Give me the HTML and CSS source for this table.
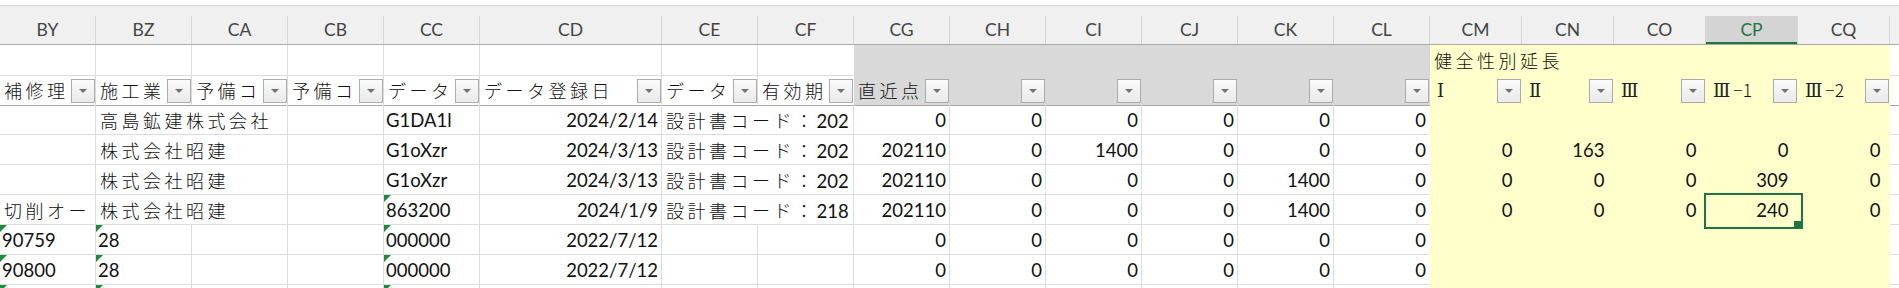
FILE: index.html
```html
<!DOCTYPE html>
<html lang="ja">
<head>
<meta charset="utf-8">
<title>Sheet</title>
<link rel="stylesheet" href="styles.css">
</head>
<body>
<div class="sheet">
  <div class="topgap"></div>
  <div class="colhead">
    <div class="hc">BY</div><div class="hc">BZ</div><div class="hc">CA</div><div class="hc">CB</div><div class="hc">CC</div><div class="hc">CD</div><div class="hc">CE</div><div class="hc">CF</div><div class="hc">CG</div><div class="hc">CH</div><div class="hc">CI</div><div class="hc">CJ</div><div class="hc">CK</div><div class="hc">CL</div><div class="hc">CM</div><div class="hc">CN</div><div class="hc">CO</div><div class="hc hsel">CP</div><div class="hc">CQ</div><div class="hc end"></div>
  </div>

  <div class="row">
    <div class="c"></div><div class="c"></div><div class="c"></div><div class="c"></div><div class="c"></div><div class="c"></div><div class="c"></div><div class="c nb"></div>
    <div class="c g s6"></div>
    <div class="c y s5"><span class="j">健全性別延長</span></div>
    <div class="c end"></div>
  </div>

  <div class="row r2">
    <div class="c"><span class="j">補修理</span><i class="fb"></i></div>
    <div class="c"><span class="j">施工業</span><i class="fb"></i></div>
    <div class="c"><span class="j">予備コ</span><i class="fb"></i></div>
    <div class="c"><span class="j">予備コ</span><i class="fb"></i></div>
    <div class="c"><span class="j">データ</span><i class="fb"></i></div>
    <div class="c"><span class="j">データ登録日</span><i class="fb"></i></div>
    <div class="c"><span class="j">データ</span><i class="fb"></i></div>
    <div class="c nb"><span class="j">有効期</span><i class="fb"></i></div>
    <div class="c g"><span class="j">直近点</span><i class="fb"></i></div>
    <div class="c g"><i class="fb"></i></div>
    <div class="c g"><i class="fb"></i></div>
    <div class="c g"><i class="fb"></i></div>
    <div class="c g"><i class="fb"></i></div>
    <div class="c g"><i class="fb"></i></div>
    <div class="c y"><span class="rn">Ⅰ</span><i class="fb"></i></div>
    <div class="c y"><span class="rn">Ⅱ</span><i class="fb"></i></div>
    <div class="c y"><span class="rn">Ⅲ</span><i class="fb"></i></div>
    <div class="c y"><span class="rn">Ⅲ</span><span class="jn">−1</span><i class="fb"></i></div>
    <div class="c y"><span class="rn">Ⅲ</span><span class="jn">−2</span><i class="fb"></i></div>
    <div class="c end"></div>
  </div>

  <div class="row">
    <div class="c"></div>
    <div class="c s2 clip"><span class="j">高島鉱建株式会社</span></div>
    <div class="c"></div>
    <div class="c">G1DA1l</div>
    <div class="c r">2024/2/14</div>
    <div class="c s2 clip"><span class="j">設計書コード：</span>202</div>
    <div class="c r">0</div><div class="c r">0</div><div class="c r">0</div><div class="c r">0</div><div class="c r">0</div><div class="c r nb">0</div>
    <div class="c y"></div><div class="c y"></div><div class="c y"></div><div class="c y"></div><div class="c y"></div>
    <div class="c end"></div>
  </div>

  <div class="row">
    <div class="c"></div>
    <div class="c s2 clip"><span class="j">株式会社昭建</span></div>
    <div class="c"></div>
    <div class="c">G1oXzr</div>
    <div class="c r">2024/3/13</div>
    <div class="c s2 clip"><span class="j">設計書コード：</span>202</div>
    <div class="c r">202110</div><div class="c r">0</div><div class="c r">1400</div><div class="c r">0</div><div class="c r">0</div><div class="c r nb">0</div>
    <div class="c y yr">0</div><div class="c y yr">163</div><div class="c y yr">0</div><div class="c y yr">0</div><div class="c y yr">0</div>
    <div class="c end"></div>
  </div>

  <div class="row">
    <div class="c"></div>
    <div class="c s2 clip"><span class="j">株式会社昭建</span></div>
    <div class="c"></div>
    <div class="c">G1oXzr</div>
    <div class="c r">2024/3/13</div>
    <div class="c s2 clip"><span class="j">設計書コード：</span>202</div>
    <div class="c r">202110</div><div class="c r">0</div><div class="c r">0</div><div class="c r">0</div><div class="c r">1400</div><div class="c r nb">0</div>
    <div class="c y yr">0</div><div class="c y yr">0</div><div class="c y yr">0</div><div class="c y yr">309</div><div class="c y yr">0</div>
    <div class="c end"></div>
  </div>

  <div class="row">
    <div class="c clip"><span class="j">切削オー</span></div>
    <div class="c s2 clip"><span class="j">株式会社昭建</span></div>
    <div class="c"></div>
    <div class="c t">863200</div>
    <div class="c r">2024/1/9</div>
    <div class="c s2 clip"><span class="j">設計書コード：</span>218</div>
    <div class="c r">202110</div><div class="c r">0</div><div class="c r">0</div><div class="c r">0</div><div class="c r">1400</div><div class="c r nb">0</div>
    <div class="c y yr">0</div><div class="c y yr">0</div><div class="c y yr">0</div><div class="c y yr active">240</div><div class="c y yr">0</div>
    <div class="c end"></div>
  </div>

  <div class="row">
    <div class="c t">90759</div>
    <div class="c t">28</div>
    <div class="c"></div>
    <div class="c"></div>
    <div class="c t">000000</div>
    <div class="c r">2022/7/12</div>
    <div class="c"></div>
    <div class="c"></div>
    <div class="c r">0</div><div class="c r">0</div><div class="c r">0</div><div class="c r">0</div><div class="c r">0</div><div class="c r nb">0</div>
    <div class="c y"></div><div class="c y"></div><div class="c y"></div><div class="c y"></div><div class="c y"></div>
    <div class="c end"></div>
  </div>

  <div class="row">
    <div class="c t">90800</div>
    <div class="c t">28</div>
    <div class="c"></div>
    <div class="c"></div>
    <div class="c t">000000</div>
    <div class="c r">2022/7/12</div>
    <div class="c"></div>
    <div class="c"></div>
    <div class="c r">0</div><div class="c r">0</div><div class="c r">0</div><div class="c r">0</div><div class="c r">0</div><div class="c r nb">0</div>
    <div class="c y"></div><div class="c y"></div><div class="c y"></div><div class="c y"></div><div class="c y"></div>
    <div class="c end"></div>
  </div>

  <div class="row">
    <div class="c t"></div>
    <div class="c t"></div>
    <div class="c"></div>
    <div class="c"></div>
    <div class="c t"></div>
    <div class="c"></div>
    <div class="c"></div>
    <div class="c"></div>
    <div class="c"></div><div class="c"></div><div class="c"></div><div class="c"></div><div class="c"></div><div class="c nb"></div>
    <div class="c y"></div><div class="c y"></div><div class="c y"></div><div class="c y"></div><div class="c y"></div>
    <div class="c end"></div>
  </div>
</div>
</body>
</html>
```

FILE: styles.css
```css
* {
  box-sizing: border-box;
}

html,
body {
  margin: 0;
  padding: 0;
  background: #ffffff;
}

body {
  width: 1899px;
  height: 288px;
  overflow: hidden;
  font-family: Lato, "Noto Sans CJK JP", sans-serif;
  color: #111111;
}

.sheet {
  --cols: 96px 96px 96px 96px 96px 182px 96px 96px 96px 96px 96px 96px 96px 96px 92px 92px 92px 92px 92px 9px;
  width: 1899px;
}

.topgap {
  height: 5px;
  background: #ffffff;
}

.colhead {
  display: grid;
  grid-template-columns: var(--cols);
  padding-top: 10px;
  background: #f0f0f0;
  border-top: 1px solid #d5d5d5;
  border-bottom: 1px solid #ababab;
}

.hc {
  height: 28px;
  line-height: 28px;
  text-align: center;
  font-size: 17.5px;
  color: #444444;
  border-right: 1px solid #d5d5d5;
}

.hc.hsel {
  background: #d4d4d4;
  color: #217346;
  box-shadow: inset 0 -2px 0 #217346;
}

.hc.end {
  border-right: none;
}

.row {
  display: grid;
  grid-template-columns: var(--cols);
  height: 30px;
}

.c {
  position: relative;
  min-width: 0;
  padding: 5px 2px 4px 2px;
  font-size: 18.5px;
  line-height: 20px;
  white-space: nowrap;
  border-right: 1px solid #dadcdd;
  border-bottom: 1px solid #dadcdd;
}

.r {
  text-align: right;
  padding-right: 3px;
}

.clip {
  overflow: hidden;
}

.s2 {
  grid-column: span 2;
}

.s5 {
  grid-column: span 5;
}

.s6 {
  grid-column: span 6;
}

.nb {
  border-right-color: transparent;
}

.end {
  border-right: none;
}

.g {
  background: #d9d9d9;
  border-color: transparent;
}

.y {
  background: #ffffcc;
  border-color: transparent;
}

.yr {
  text-align: right;
  padding-right: 8.5px;
}

.r2 .c {
  border-bottom-color: #a6a6a6;
}

.j {
  font-family: "Noto Sans CJK JP", sans-serif;
  font-weight: 300;
  font-size: 18px;
  letter-spacing: 3.5px;
  padding-left: 2px;
}

.rn {
  font-family: "DejaVu Serif", "Liberation Serif", serif;
  font-size: 18px;
  color: #222222;
  padding-left: 5px;
}

.jn {
  font-family: "Noto Sans CJK JP", sans-serif;
  font-weight: 300;
  font-size: 17.5px;
  padding-left: 3px;
}

.fb {
  position: absolute;
  right: 0;
  bottom: 2px;
  width: 24px;
  height: 24px;
  border: 1px solid #ababab;
  background: linear-gradient(#fbfbfb, #e9e9e9);
}

.fb::after {
  content: "";
  position: absolute;
  left: 7px;
  top: 9px;
  width: 0;
  height: 0;
  border-left: 4px solid transparent;
  border-right: 4px solid transparent;
  border-top: 4px solid #727272;
}

.t::before {
  content: "";
  position: absolute;
  left: 0;
  top: 0;
  width: 0;
  height: 0;
  border-top: 7px solid #1f8a3d;
  border-right: 7px solid transparent;
}

.active::after {
  content: "";
  position: absolute;
  left: -2px;
  top: -2px;
  width: 95px;
  height: 32px;
  border: 2px solid #217346;
  z-index: 2;
}

.active::before {
  content: "";
  position: absolute;
  left: 88px;
  top: 26px;
  width: 7px;
  height: 7px;
  background: #217346;
  z-index: 3;
}
```
